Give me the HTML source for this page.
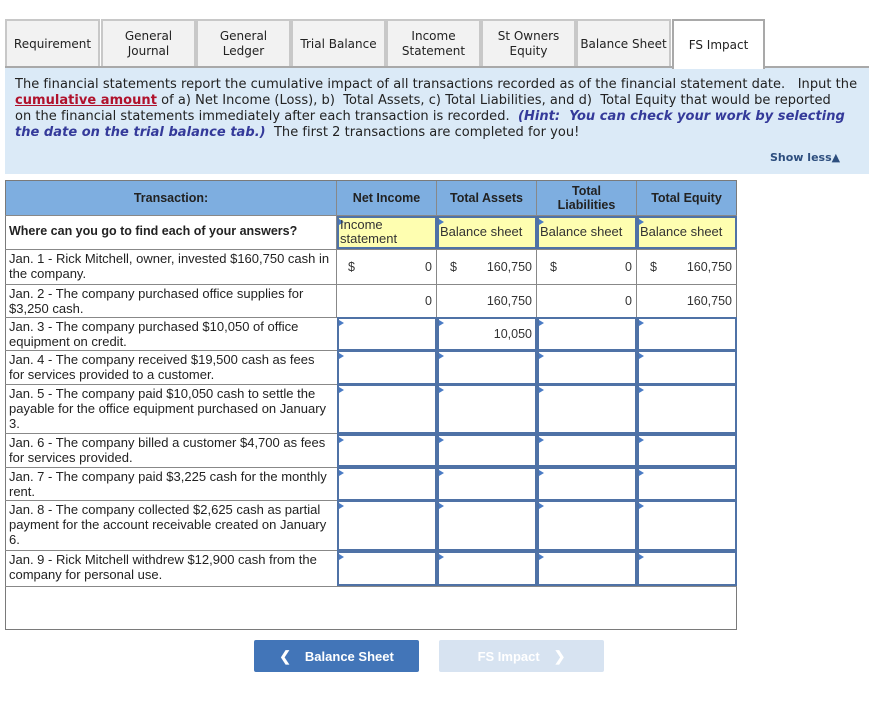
<!DOCTYPE html>
<html><head><meta charset="utf-8"><style>
*{margin:0;padding:0;box-sizing:border-box}
body{width:876px;height:703px;background:#fff;position:relative;overflow:hidden;font-family:"DejaVu Sans",Verdana,sans-serif}
.a{position:absolute}
.tab{position:absolute;top:19px;height:48px;background:#f2f2f2;border:2px solid #c8c8c8;border-bottom:none;font-size:12px;color:#222;display:flex;align-items:center;justify-content:center;text-align:center;line-height:15px}
.panel{left:5px;top:66px;width:864px;height:108px;background:#dbeaf7;border-top:2px solid #a9a9a9}
.txt{left:15px;top:77px;width:860px;font-size:13px;line-height:16px;color:#222;letter-spacing:0.03px;white-space:nowrap}
.red{color:#b0122c;font-weight:bold;text-decoration:underline}
.hint{color:#343a9a;font-weight:bold;font-style:italic}
.t{font-family:"Liberation Sans",Arial,sans-serif;font-size:13px;color:#222}
.c{position:absolute;border:1px solid #7a7a7a}
.inp{position:absolute;border:2px solid #4f72a6;background:#fff}
.tri{position:absolute;left:0;top:1px;width:0;height:0;border-top:3px solid transparent;border-bottom:3px solid transparent;border-left:5px solid #4a7bc4}
.num{position:absolute;font-family:"Liberation Sans",Arial,sans-serif;font-size:12.5px;color:#333}
</style></head><body>
<div class="tab" style="left:5px;width:95px">Requirement</div>
<div class="tab" style="left:101px;width:95px">General<br>Journal</div>
<div class="tab" style="left:196px;width:95px">General<br>Ledger</div>
<div class="tab" style="left:291px;width:95px">Trial Balance</div>
<div class="tab" style="left:386px;width:95px">Income<br>Statement</div>
<div class="tab" style="left:481px;width:95px">St Owners<br>Equity</div>
<div class="tab" style="left:576px;width:95px">Balance Sheet</div>
<div class="tab" style="left:672px;width:93px;background:#fff;border-color:#a9a9a9;height:50px;z-index:2">FS Impact</div>
<div class="a panel"></div>
<div class="a txt">The financial statements report the cumulative impact of all transactions recorded as of the financial statement date. &nbsp; Input the<br><span class="red">cumulative amount</span> of a) Net Income (Loss), b) &nbsp;Total Assets, c) Total Liabilities, and d) &nbsp;Total Equity that would be reported<br>on the financial statements immediately after each transaction is recorded. &nbsp;<span class="hint">(Hint: &nbsp;You can check your work by selecting<br>the date on the trial balance tab.)</span> &nbsp;The first 2 transactions are completed for you!</div>
<div class="a" style="left:770px;top:151px;font-size:11px;font-weight:bold;color:#2d4e7e">Show less&#9650;</div>

<div class="c" style="left:5px;top:180px;width:732px;height:450px;border-width:1px"></div>
<div class="a" style="left:6px;top:181px;width:730px;height:34px;background:#7eaee0"></div>
<div class="a t" style="left:6px;top:181px;width:330px;height:34px;display:flex;align-items:center;justify-content:center;font-weight:bold;font-size:12.5px">Transaction:</div>
<div class="a t" style="left:336px;top:181px;width:100px;height:34px;display:flex;align-items:center;justify-content:center;font-weight:bold;font-size:12.5px;border-left:1px solid #888">Net Income</div>
<div class="a t" style="left:436px;top:181px;width:100px;height:34px;display:flex;align-items:center;justify-content:center;font-weight:bold;font-size:12.5px;border-left:1px solid #888">Total Assets</div>
<div class="a t" style="left:536px;top:181px;width:100px;height:34px;display:flex;align-items:center;justify-content:center;font-weight:bold;font-size:12.5px;border-left:1px solid #888;text-align:center;line-height:14px">Total<br>Liabilities</div>
<div class="a t" style="left:636px;top:181px;width:100px;height:34px;display:flex;align-items:center;justify-content:center;font-weight:bold;font-size:12.5px;border-left:1px solid #888">Total Equity</div>

<div class="a" style="left:5px;top:215px;width:732px;height:1px;background:#888"></div>
<div class="a" style="left:5px;top:249px;width:732px;height:1px;background:#888"></div>
<div class="a" style="left:5px;top:284px;width:732px;height:1px;background:#888"></div>
<div class="a" style="left:5px;top:317px;width:332px;height:1px;background:#888"></div>
<div class="a" style="left:5px;top:350px;width:332px;height:1px;background:#888"></div>
<div class="a" style="left:5px;top:384px;width:332px;height:1px;background:#888"></div>
<div class="a" style="left:5px;top:433px;width:332px;height:1px;background:#888"></div>
<div class="a" style="left:5px;top:467px;width:332px;height:1px;background:#888"></div>
<div class="a" style="left:5px;top:500px;width:332px;height:1px;background:#888"></div>
<div class="a" style="left:5px;top:550px;width:332px;height:1px;background:#888"></div>
<div class="a" style="left:5px;top:586px;width:732px;height:1px;background:#888"></div>
<div class="a" style="left:336px;top:215px;width:1px;height:102px;background:#888"></div>
<div class="a" style="left:436px;top:249px;width:1px;height:68px;background:#888"></div>
<div class="a" style="left:536px;top:249px;width:1px;height:68px;background:#888"></div>
<div class="a" style="left:636px;top:249px;width:1px;height:68px;background:#888"></div>

<div class="inp" style="left:337px;top:216px;width:100px;height:33px;background:#fefeb0"><div class="tri"></div></div>
<div class="inp" style="left:437px;top:216px;width:100px;height:33px;background:#fefeb0"><div class="tri"></div></div>
<div class="inp" style="left:537px;top:216px;width:100px;height:33px;background:#fefeb0"><div class="tri"></div></div>
<div class="inp" style="left:637px;top:216px;width:100px;height:33px;background:#fefeb0"><div class="tri"></div></div>
<div class="a t" style="left:340px;top:218px;line-height:14px;color:#333">Income<br>statement</div>
<div class="a t" style="left:440px;top:224px;color:#333">Balance sheet</div>
<div class="a t" style="left:540px;top:224px;color:#333">Balance sheet</div>
<div class="a t" style="left:640px;top:224px;color:#333">Balance sheet</div>
<div class="a t" style="left:9px;top:224px;font-weight:bold;font-size:12.5px">Where can you go to find each of your answers?</div>

<div class="a t" style="left:9px;top:251px;width:324px;line-height:15px">Jan. 1 - Rick Mitchell, owner, invested $160,750 cash in the company.</div>
<div class="a t" style="left:9px;top:286px;width:324px;line-height:15px">Jan. 2 - The company purchased office supplies for $3,250 cash.</div>
<div class="a t" style="left:9px;top:319px;width:324px;line-height:15px">Jan. 3 - The company purchased $10,050 of office equipment on credit.</div>
<div class="a t" style="left:9px;top:352px;width:324px;line-height:15px">Jan. 4 - The company received $19,500 cash as fees for services provided to a customer.</div>
<div class="a t" style="left:9px;top:386px;width:324px;line-height:15px">Jan. 5 - The company paid $10,050 cash to settle the payable for the office equipment purchased on January 3.</div>
<div class="a t" style="left:9px;top:435px;width:324px;line-height:15px">Jan. 6 - The company billed a customer $4,700 as fees for services provided.</div>
<div class="a t" style="left:9px;top:469px;width:324px;line-height:15px">Jan. 7 - The company paid $3,225 cash for the monthly rent.</div>
<div class="a t" style="left:9px;top:502px;width:324px;line-height:15px">Jan. 8 - The company collected $2,625 cash as partial payment for the account receivable created on January 6.</div>
<div class="a t" style="left:9px;top:552px;width:324px;line-height:15px">Jan. 9 - Rick Mitchell withdrew $12,900 cash from the company for personal use.</div>

<div class="num" style="left:348px;top:260px">$</div><div class="num" style="left:400px;top:260px;width:32px;text-align:right">0</div>
<div class="num" style="left:450px;top:260px">$</div><div class="num" style="left:470px;top:260px;width:62px;text-align:right">160,750</div>
<div class="num" style="left:550px;top:260px">$</div><div class="num" style="left:600px;top:260px;width:32px;text-align:right">0</div>
<div class="num" style="left:650px;top:260px">$</div><div class="num" style="left:670px;top:260px;width:62px;text-align:right">160,750</div>
<div class="num" style="left:400px;top:294px;width:32px;text-align:right">0</div>
<div class="num" style="left:470px;top:294px;width:62px;text-align:right">160,750</div>
<div class="num" style="left:600px;top:294px;width:32px;text-align:right">0</div>
<div class="num" style="left:670px;top:294px;width:62px;text-align:right">160,750</div>

<div class="inp" style="left:337px;top:317px;width:100px;height:34px"><div class="tri"></div></div>
<div class="inp" style="left:437px;top:317px;width:100px;height:34px"><div class="tri"></div></div>
<div class="inp" style="left:537px;top:317px;width:100px;height:34px"><div class="tri"></div></div>
<div class="inp" style="left:637px;top:317px;width:100px;height:34px"><div class="tri"></div></div>
<div class="num" style="left:470px;top:327px;width:62px;text-align:right">10,050</div>

<div class="inp" style="left:337px;top:350px;width:100px;height:35px"><div class="tri"></div></div>
<div class="inp" style="left:437px;top:350px;width:100px;height:35px"><div class="tri"></div></div>
<div class="inp" style="left:537px;top:350px;width:100px;height:35px"><div class="tri"></div></div>
<div class="inp" style="left:637px;top:350px;width:100px;height:35px"><div class="tri"></div></div>

<div class="inp" style="left:337px;top:384px;width:100px;height:50px"><div class="tri"></div></div>
<div class="inp" style="left:437px;top:384px;width:100px;height:50px"><div class="tri"></div></div>
<div class="inp" style="left:537px;top:384px;width:100px;height:50px"><div class="tri"></div></div>
<div class="inp" style="left:637px;top:384px;width:100px;height:50px"><div class="tri"></div></div>

<div class="inp" style="left:337px;top:434px;width:100px;height:33px"><div class="tri"></div></div>
<div class="inp" style="left:437px;top:434px;width:100px;height:33px"><div class="tri"></div></div>
<div class="inp" style="left:537px;top:434px;width:100px;height:33px"><div class="tri"></div></div>
<div class="inp" style="left:637px;top:434px;width:100px;height:33px"><div class="tri"></div></div>

<div class="inp" style="left:337px;top:467px;width:100px;height:34px"><div class="tri"></div></div>
<div class="inp" style="left:437px;top:467px;width:100px;height:34px"><div class="tri"></div></div>
<div class="inp" style="left:537px;top:467px;width:100px;height:34px"><div class="tri"></div></div>
<div class="inp" style="left:637px;top:467px;width:100px;height:34px"><div class="tri"></div></div>

<div class="inp" style="left:337px;top:500px;width:100px;height:51px"><div class="tri"></div></div>
<div class="inp" style="left:437px;top:500px;width:100px;height:51px"><div class="tri"></div></div>
<div class="inp" style="left:537px;top:500px;width:100px;height:51px"><div class="tri"></div></div>
<div class="inp" style="left:637px;top:500px;width:100px;height:51px"><div class="tri"></div></div>

<div class="inp" style="left:337px;top:551px;width:100px;height:35px"><div class="tri"></div></div>
<div class="inp" style="left:437px;top:551px;width:100px;height:35px"><div class="tri"></div></div>
<div class="inp" style="left:537px;top:551px;width:100px;height:35px"><div class="tri"></div></div>
<div class="inp" style="left:637px;top:551px;width:100px;height:35px"><div class="tri"></div></div>

<div class="a" style="left:254px;top:640px;width:165px;height:32px;background:#4275b8;border-radius:2px;color:#fff;font-family:'Liberation Sans',Arial,sans-serif;font-weight:bold;font-size:13px;display:flex;align-items:center;justify-content:center"><span style="font-size:14px;margin-right:14px">&#10094;</span>Balance Sheet</div>
<div class="a" style="left:439px;top:640px;width:165px;height:32px;background:#d7e3f1;border-radius:2px;color:#fff;font-family:'Liberation Sans',Arial,sans-serif;font-weight:bold;font-size:13px;display:flex;align-items:center;justify-content:center">FS Impact<span style="font-size:14px;margin-left:14px">&#10095;</span></div>
</body></html>
